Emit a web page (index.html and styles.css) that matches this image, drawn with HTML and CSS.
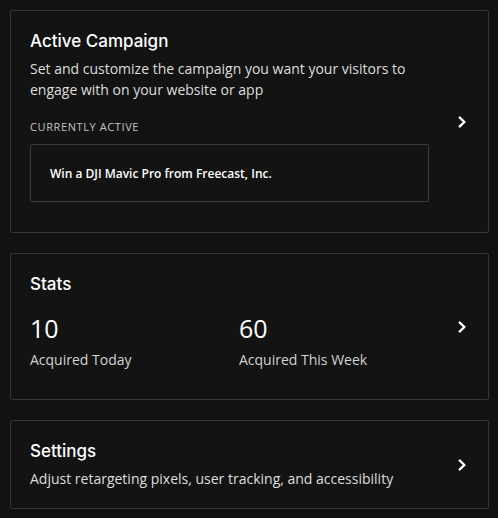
FILE: index.html
```html
<!DOCTYPE html>
<html lang="en">
<head>
  <meta charset="UTF-8" />
  <meta name="viewport" content="width=device-width, initial-scale=1.0"/>
  <title>Campaign Overview</title>
  <link rel="stylesheet" href="styles.css">
</head>
<body>
  <div class="panel">

    <a class="card" href="#campaign">
      <div class="card-main">
        <h2>Active Campaign</h2>
        <p class="desc">Set and customize the campaign you want your visitors to engage with on your website or app</p>
        <div class="label">Currently active</div>
        <div class="current">Win a DJI Mavic Pro from Freecast, Inc.</div>
      </div>
      <svg class="chevron" width="9" height="12" viewBox="0 0 9 12"><polyline points="1.8,1.6 6.4,6 1.8,10.4" /></svg>
    </a>

    <a class="card stats-card" href="#stats">
      <div class="card-main">
        <h2>Stats</h2>
        <div class="stats">
          <div class="stat">
            <div class="num">10</div>
            <div class="caption">Acquired Today</div>
          </div>
          <div class="stat">
            <div class="num">60</div>
            <div class="caption">Acquired This Week</div>
          </div>
        </div>
      </div>
      <svg class="chevron" width="9" height="12" viewBox="0 0 9 12"><polyline points="1.8,1.6 6.4,6 1.8,10.4" /></svg>
    </a>

    <a class="card settings-card" href="#settings">
      <div class="card-main">
        <h2>Settings</h2>
        <p class="desc">Adjust retargeting pixels, user tracking, and accessibility</p>
      </div>
      <svg class="chevron" width="9" height="12" viewBox="0 0 9 12"><polyline points="1.8,1.6 6.4,6 1.8,10.4" /></svg>
    </a>

  </div>
</body>
</html>
```

FILE: styles.css
```css
body {
  font-family: "Open Sans", Arial, sans-serif;
  background-color: #121212;
  color: #ffffff;
  margin: 0;
}

.panel {
  display: flex;
  flex-direction: column;
  gap: 20px;
  padding: 10px 9px 0 10px;
}

.card {
  display: flex;
  align-items: center;
  border: 1px solid #353535;
  border-radius: 2px;
  background-color: #131313;
  color: #ffffff;
  text-decoration: none;
}

.card-main {
  flex: 1;
  padding: 19px 0 30px 19px;
}

h2 {
  margin: 0;
  font-family: Inter, "Open Sans", sans-serif;
  font-size: 17px;
  font-weight: 500;
  line-height: 22px;
  color: #ffffff;
}

.desc {
  margin: 6px 0 0;
  font-size: 14px;
  line-height: 21px;
  color: #dedede;
}

.label {
  margin-top: 19px;
  font-size: 11px;
  line-height: 16px;
  font-weight: 500;
  letter-spacing: 0.6px;
  text-transform: uppercase;
  color: #c4c4c4;
}

.current {
  box-sizing: border-box;
  width: 399px;
  height: 58px;
  margin-top: 9px;
  padding: 0 19px;
  display: flex;
  align-items: center;
  border: 1px solid #3c3c3c;
  border-radius: 2px;
  font-size: 12px;
  font-weight: 600;
  color: #ffffff;
}

.stats {
  display: grid;
  grid-template-columns: 1fr 1fr;
  margin-top: 18px;
}

.num {
  font-size: 25px;
  line-height: 30px;
  color: #ffffff;
}

.caption {
  margin-top: 6px;
  font-size: 14px;
  line-height: 21px;
  color: #d2d2d2;
}

.stats-card .card-main {
  padding-bottom: 29px;
}

.settings-card .card-main {
  padding-bottom: 19px;
}

.chevron {
  flex: none;
  margin: 0 21px 0 10px;
}

.chevron polyline {
  fill: none;
  stroke: #ffffff;
  stroke-width: 2.4;
  stroke-linecap: round;
  stroke-linejoin: round;
}
```
